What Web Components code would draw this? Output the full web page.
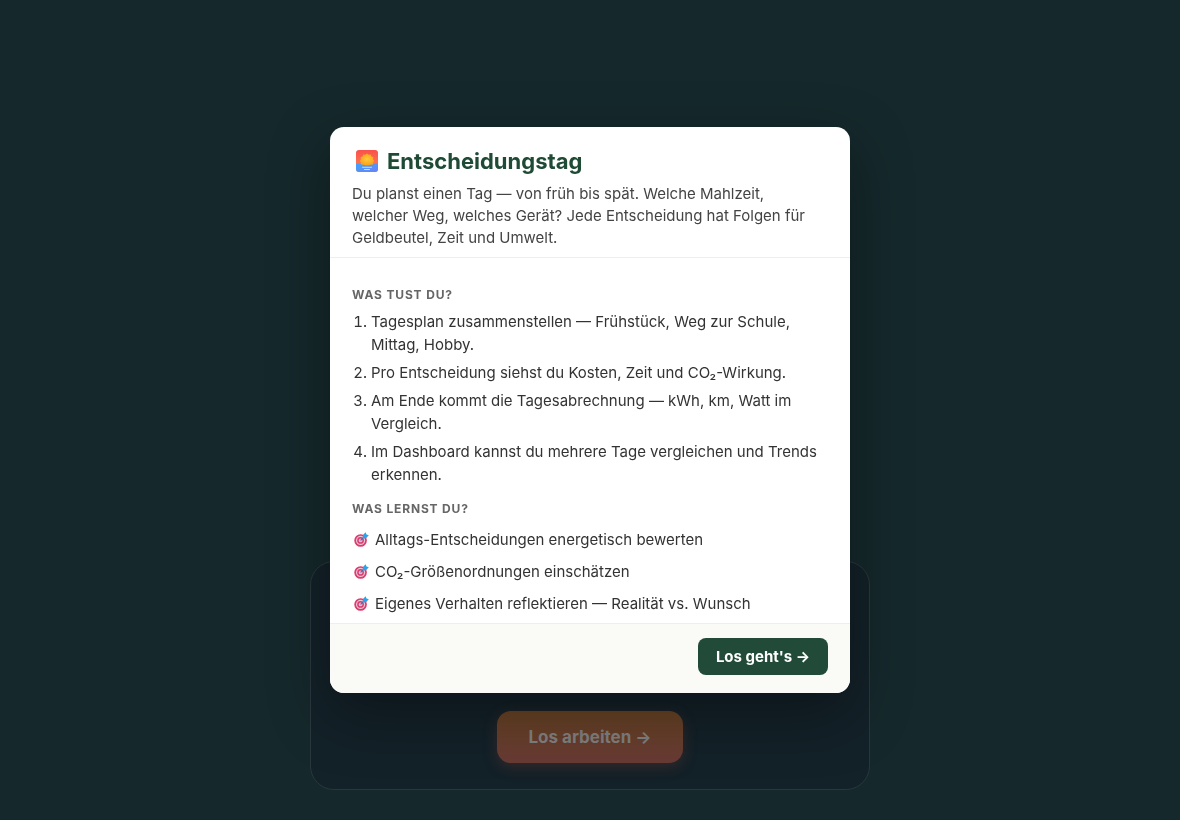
<!DOCTYPE html>
<html lang="de">
<head>
<meta charset="utf-8">
<meta name="viewport" content="width=device-width, initial-scale=1">
<title>Entscheidungstag</title>
<style>
  html, body { margin: 0; min-height: 100%; }
  body { background: #15282b; font-family: Inter, "Liberation Sans", sans-serif; font-size: 15px; color: #333; }
</style>
</head>
<body>
<start-page>
  <start-card>Los arbeiten →</start-card>
  <intro-dialog slot="dialog">
    <sun-icon slot="icon"></sun-icon>
    <span slot="title">Entscheidungstag</span>
    <span slot="lead">Du planst einen Tag — von früh bis spät. Welche Mahlzeit, welcher Weg, welches Gerät? Jede Entscheidung hat Folgen für Geldbeutel, Zeit und Umwelt.</span>
    <step-list heading="Was tust du?"></step-list>
    <goal-list heading="Was lernst du?">
      <goal-item>Alltags-Entscheidungen energetisch bewerten</goal-item>
      <goal-item>CO₂-Größenordnungen einschätzen</goal-item>
      <goal-item>Eigenes Verhalten reflektieren — Realität vs. Wunsch</goal-item>
    </goal-list>
    <span slot="action">Los geht's →</span>
  </intro-dialog>
</start-page>
<script>
  const component = (name, html) => customElements.define(name, class extends HTMLElement {
    constructor() {
      super();
      this.attachShadow({ mode: 'open' }).innerHTML = html;
    }
    connectedCallback() {
      const heading = this.shadowRoot.querySelector('h2');
      if (heading && this.hasAttribute('heading')) heading.textContent = this.getAttribute('heading');
    }
  });

  const headingStyle = `h2 { margin: 0; font-size: 12px; line-height: 18px; font-weight: 700; letter-spacing: 0.07em; text-transform: uppercase; color: #666; }`;

  component('start-page', `
    <style>
      :host { display: flex; flex-direction: column; justify-content: flex-end; align-items: center; min-height: 100vh; box-sizing: border-box; padding: 30px 20px; }
      .overlay { position: fixed; inset: 0; display: grid; place-items: center; padding: 20px; box-sizing: border-box; overflow: auto; }
    </style>
    <slot></slot>
    <div class="overlay"><slot name="dialog"></slot></div>`);

  component('start-card', `
    <style>
      :host { display: flex; align-items: flex-end; justify-content: center; width: 100%; max-width: 560px; min-height: 229px; box-sizing: border-box; padding: 26px; border: 1px solid #2a373d; border-radius: 24px; background: #132128; }
      button { border: 0; border-radius: 14px; padding: 14px 31px; font: 700 17px/24px Inter, sans-serif; color: #808080; background: linear-gradient(#674324, #683a34); box-shadow: 0 4px 14px rgba(104, 58, 52, .4); }
    </style>
    <button type="button"><slot></slot></button>`);

  component('intro-dialog', `
    <style>
      :host { display: block; width: 100%; max-width: 520px; border-radius: 14px; overflow: hidden; background: #fff; box-shadow: 0 20px 60px rgba(0, 0, 0, .35); }
      header { padding: 20px 22px 8px; border-bottom: 1px solid #eee; }
      h1 { display: flex; align-items: center; gap: 8px; margin: 0; font-size: 22px; line-height: 28px; font-weight: 700; color: #1f4a36; }
      p { margin: 8px 0 0; padding-right: 8px; line-height: 22px; color: #444; }
      main { padding: 28px 22px 8px; }
      footer { display: flex; justify-content: flex-end; padding: 14px 22px 18px; border-top: 1px solid #eee; background: #fafbf7; }
      button { border: 0; border-radius: 8px; padding: 8px 18px; font: 700 15px/21px Inter, sans-serif; color: #fff; background: #214b38; }
    </style>
    <section role="dialog" aria-labelledby="title">
      <header>
        <h1 id="title"><slot name="icon"></slot><slot name="title"></slot></h1>
        <p><slot name="lead"></slot></p>
      </header>
      <main><slot></slot></main>
      <footer><button type="button"><slot name="action"></slot></button></footer>
    </section>`);

  component('step-list', `
    <style>
      :host { display: block; }
      ${headingStyle}
      ol { margin: 6px 0 0; padding-left: 19px; line-height: 23px; }
      li + li { margin-top: 5px; }
    </style>
    <h2></h2>
    <ol>
      <li>Tagesplan zusammenstellen — Frühstück, Weg zur Schule, Mittag, Hobby.</li>
      <li>Pro Entscheidung siehst du Kosten, Zeit und CO₂-Wirkung.</li>
      <li>Am Ende kommt die Tagesabrechnung — kWh, km, Watt im Vergleich.</li>
      <li>Im Dashboard kannst du mehrere Tage vergleichen und Trends erkennen.</li>
    </ol>`);

  component('goal-list', `
    <style>
      :host { display: block; margin-top: 14px; }
      ${headingStyle}
      div { display: grid; gap: 9px; margin-top: 10px; }
    </style>
    <h2></h2>
    <div role="list"><slot></slot></div>`);

  component('goal-item', `
    <style>
      :host { display: flex; align-items: center; gap: 6px; line-height: 23px; }
      svg { flex: none; width: 15px; height: 15px; margin-left: 2px; }
    </style>
    <svg viewBox="0 0 16 16" aria-hidden="true">
      <circle cx="7" cy="9" r="6.7" fill="#dc3a69"/>
      <circle cx="7" cy="9" r="4.9" fill="#e6c3d8"/>
      <circle cx="7" cy="9" r="3.6" fill="#d93d70"/>
      <circle cx="7" cy="9" r="2" fill="#e8b5d0"/>
      <path d="M7 9L12 4" stroke="#3c70a8" stroke-width="1.1"/>
      <path d="M9.500 6.700V3.300L12.400.3l.9 2.400 2.500.8-3 3.200z" fill="#2ba3e8"/>
    </svg>
    <slot></slot>`);

  component('sun-icon', `
    <style>
      :host { display: block; width: 24px; height: 24px; margin-left: 3px; }
      svg { display: block; }
    </style>
    <svg width="24" height="24" viewBox="0 0 24 24" aria-hidden="true">
      <defs>
        <linearGradient id="sky" x2="0" y2="1"><stop stop-color="#f9504c"/><stop offset="1" stop-color="#ff8a50"/></linearGradient>
        <linearGradient id="sea" x2="1" y2="1"><stop stop-color="#3fa5f5"/><stop offset="1" stop-color="#6b80f8"/></linearGradient>
        <radialGradient id="sun"><stop stop-color="#ffc93a"/><stop offset="1" stop-color="#f9a51d"/></radialGradient>
        <clipPath id="tile"><rect x="1" y="1" width="22" height="22" rx="3"/></clipPath>
      </defs>
      <g clip-path="url(#tile)">
        <path fill="url(#sky)" d="M1 1h22v22H1z"/>
        <path fill="url(#sun)" d="M12 4.500l1.700 1.200 2-.2.700 1.900 1.900.8-.2 2 1.200 1.700-1.200 1.700.2 2.400H5.700l.2-2.400-1.200-1.700 1.200-1.700-.2-2 1.900-.8.700-1.900 2 .2z"/>
        <path fill="url(#sea)" d="M1 14.500q2-.8 4 .3 1.500 1 3.500.9 1.700 1 3.500 1t3.500-1q2 .1 3.500-.9 2-1.100 4-.3V23H1z"/>
        <path stroke="#c8dcff" stroke-linecap="round" d="M7.500 18.300h9M9.500 20.500h5"/>
      </g>
    </svg>`);
</script>
</body>
</html>
